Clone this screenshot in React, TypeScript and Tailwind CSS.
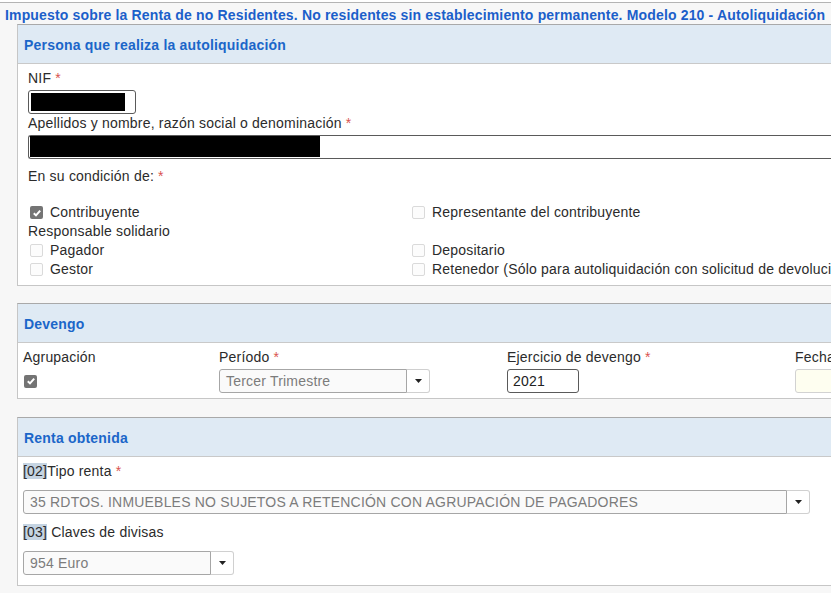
import React from 'react';

type CheckProps = { checked?: boolean };

const Req = () => <span className="text-[#d9534f]"> *</span>;

const Checkbox = ({ checked }: CheckProps) =>
  checked ? (
    <span className="flex w-[13px] h-[13px] items-center justify-center rounded-[2px] bg-[#747474]">
      <svg width="10" height="10" viewBox="0 0 10 10">
        <path d="M1.8 5.2 L4 7.4 L8.2 2.6" fill="none" stroke="#fff" strokeWidth="2" />
      </svg>
    </span>
  ) : (
    <span className="block w-[13px] h-[13px] rounded-[2px] border border-[#dadada] bg-[#fcfcfc]" />
  );

const CheckRow = ({ label, checked }: { label: string; checked?: boolean }) => (
  <div className="flex h-[19px] items-center whitespace-nowrap">
    <span className="ml-[2px] mr-[7px]">
      <Checkbox checked={checked} />
    </span>
    {label}
  </div>
);

const Select = ({ value, className }: { value: string; className: string }) => (
  <div className="flex h-[24px]">
    <div
      className={`${className} flex h-full items-center overflow-hidden whitespace-nowrap rounded-l-[3px] border border-[#a6a6a6] bg-[#fafafa] pl-[6px] text-[#7c7c7c]`}
    >
      {value}
    </div>
    <div className="flex h-full w-[23px] items-center justify-center rounded-r-[3px] border border-l-0 border-[#d0d0d0] bg-white">
      <svg width="7" height="4" viewBox="0 0 7 4">
        <path d="M0 0h7L3.5 4z" fill="#222" />
      </svg>
    </div>
  </div>
);

const Panel = ({
  title,
  className = '',
  children,
}: {
  title: string;
  className?: string;
  children: React.ReactNode;
}) => (
  <section className={`border border-[#c6c6c6] border-t-[#a9a9a9] bg-white ${className}`}>
    <div className="flex h-[39px] items-center border-b border-[#c9c9c9] bg-[#dfeaf4] pl-[6px] pt-[2px] text-[14px] font-bold text-[#1b66c9]">
      {title}
    </div>
    {children}
  </section>
);

export default function App() {
  return (
    <div className="h-[593px] w-[831px] overflow-hidden bg-[#f7f7f7] font-['Liberation_Sans',Arial,sans-serif] text-[14px] leading-[19px] tracking-[0.2px] text-[#2b2b2b]">
      <div className="h-[2px] bg-white" />
      <div className="h-px bg-[#b4b4b4]" />
      <h1 className="h-[21px] whitespace-nowrap pl-[5px] text-[14px] font-bold leading-[24px] tracking-[0.16px] text-[#1c5fca]">
        Impuesto sobre la Renta de no Residentes. No residentes sin establecimiento permanente. Modelo 210 - Autoliquidación
      </h1>

      <div className="ml-[17px] w-[900px]">
        {/* Declarante */}
        <Panel title="Persona que realiza la autoliquidación">
          <div className="pb-[6px] pl-[10px] pt-[5px]">
            <div>
              NIF
              <Req />
            </div>
            <div className="mt-[2px] h-[24px] w-[108px] rounded-[3px] border border-[#5a5a5a] p-[2px]">
              <div className="h-[18px] w-[94px] bg-black" />
            </div>
            <div>
              Apellidos y nombre, razón social o denominación
              <Req />
            </div>
            <div className="mt-[2px] h-[24px] rounded-l-[3px] border border-r-0 border-[#5a5a5a] pl-px">
              <div className="h-[21px] w-[290px] bg-black" />
            </div>
            <div className="mt-[8px]">
              En su condición de:
              <Req />
            </div>
            <div className="mt-[17px] grid grid-cols-[382px_1fr]">
              <CheckRow checked label="Contribuyente" />
              <CheckRow label="Representante del contribuyente" />
              <div className="col-span-2 h-[19px]">Responsable solidario</div>
              <CheckRow label="Pagador" />
              <CheckRow label="Depositario" />
              <CheckRow label="Gestor" />
              <CheckRow label="Retenedor (Sólo para autoliquidación con solicitud de devolución)" />
            </div>
          </div>
        </Panel>

        {/* Devengo */}
        <Panel title="Devengo" className="mt-[17px]">
          <div className="grid grid-cols-[196px_288px_288px_1fr] gap-y-[2px] pb-[5px] pl-[5px] pt-[5px]">
            <div>Agrupación</div>
            <div>
              Período
              <Req />
            </div>
            <div>
              Ejercicio de devengo
              <Req />
            </div>
            <div className="whitespace-nowrap">Fecha de devengo</div>
            <div className="flex h-[24px] items-center pl-px">
              <Checkbox checked />
            </div>
            <Select value="Tercer Trimestre" className="w-[188px]" />
            <div className="flex h-[24px] w-[72px] items-center rounded-[3px] border border-[#5a5a5a] pl-[5px] text-[#222]">
              2021
            </div>
            <div className="h-[24px] rounded-[3px] border border-[#d2d2d2] bg-[#fefef0]" />
          </div>
        </Panel>

        {/* Renta obtenida */}
        <Panel title="Renta obtenida" className="mt-[18px]">
          <div className="pb-[10px] pl-[5px] pt-[5px]">
            <div>
              <span className="bg-[#c5d4e2]">[02]</span>Tipo renta
              <Req />
            </div>
            <div className="mt-[9px]">
              <Select
                value="35 RDTOS. INMUEBLES NO SUJETOS A RETENCIÓN CON AGRUPACIÓN DE PAGADORES"
                className="w-[764px]"
              />
            </div>
            <div className="mt-[9px]">
              <span className="bg-[#c5d4e2]">[03]</span> Claves de divisas
            </div>
            <div className="mt-[9px]">
              <Select value="954 Euro" className="w-[188px]" />
            </div>
          </div>
        </Panel>
      </div>
    </div>
  );
}
